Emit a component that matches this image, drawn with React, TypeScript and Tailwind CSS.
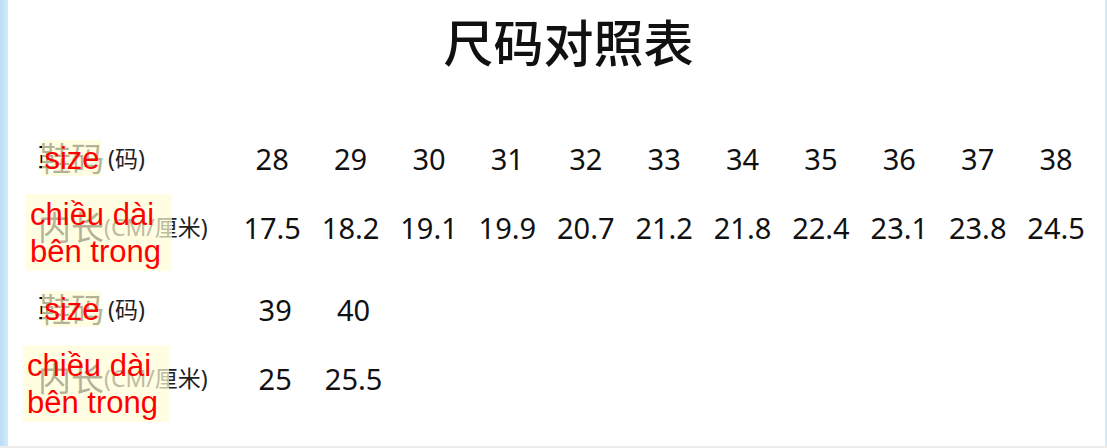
const sizes1 = ['28', '29', '30', '31', '32', '33', '34', '35', '36', '37', '38']
const lens1 = ['17.5', '18.2', '19.1', '19.9', '20.7', '21.2', '21.8', '22.4', '23.1', '23.8', '24.5']
const sizes2 = ['39', '40']
const lens2 = ['25', '25.5']

const cjk = "font-['Noto_Sans','Noto_Sans_CJK_SC',sans-serif]"

function SizeLabel({ top }: { top: number }) {
  return (
    <div className="relative flex h-full items-center">
      <span className={`${cjk} text-[33px] leading-none text-black`}>鞋码</span>
      <span className={`${cjk} ml-[4px] text-[23px] leading-none text-[#222]`}>(码)</span>
      {/* translated caption pasted over the original label */}
      <div
        className="absolute left-[4px] flex h-[36px] w-[60px] items-center justify-center bg-[rgba(255,253,215,0.7)]"
        style={{ top }}
      >
        <span className="font-['Liberation_Sans',sans-serif] text-[31px] leading-none text-[#ff0000]">size</span>
      </div>
    </div>
  )
}

function LengthLabel({ top, left }: { top: number; left: number }) {
  return (
    <div className="relative flex h-full items-center">
      <span className={`${cjk} text-[33px] leading-none text-black`}>内长</span>
      <span className={`${cjk} text-[23px] leading-none text-[#222]`}>(CM/厘米)</span>
      <div
        className="absolute flex h-[77px] w-[146px] flex-col justify-center bg-[rgba(255,253,215,0.7)] pl-[4px]"
        style={{ top, left }}
      >
        <span className="font-['Liberation_Sans',sans-serif] text-[31px] leading-[37px] text-[#ff0000]">chiều dài</span>
        <span className="font-['Liberation_Sans',sans-serif] text-[31px] leading-[37px] text-[#ff0000]">bên trong</span>
      </div>
    </div>
  )
}

function Cells({ values }: { values: string[] }) {
  return (
    <>
      {values.map((v) => (
        <div
          key={v}
          className="flex h-full items-center justify-center font-['Noto_Sans',sans-serif] text-[29px] leading-none text-[#111]"
        >
          {v}
        </div>
      ))}
    </>
  )
}

export default function App() {
  return (
    <div className="flex h-[448px] w-[1107px] flex-col overflow-hidden bg-white">
      <div className="flex h-[446px]">
        <div className="w-[8px] bg-gradient-to-r from-[#b9ddf5] to-[#d3ebfa]" />
        <div className="flex-1 bg-white">
          <h1 className={`${cjk} pl-[24px] pt-[18px] text-center text-[50px] font-medium leading-none text-[#111]`}>
            尺码对照表
          </h1>

          <div className="mt-[56px] grid grid-cols-[195px_repeat(11,78.4px)] grid-rows-[69px_69px] pl-[30px]">
            <SizeLabel top={16} />
            <Cells values={sizes1} />
            <LengthLabel top={1} left={-12} />
            <Cells values={lens1} />
          </div>

          <div className="mt-[13px] grid grid-cols-[198px_repeat(2,78.4px)] grid-rows-[69px_69px] pl-[30px]">
            <SizeLabel top={16} />
            <Cells values={sizes2} />
            <LengthLabel top={1} left={-15} />
            <Cells values={lens2} />
          </div>
        </div>
        <div className="w-[2px] bg-[#d6ebf8]" />
      </div>
      <div className="h-[2px] bg-[#ececec]" />
    </div>
  )
}
